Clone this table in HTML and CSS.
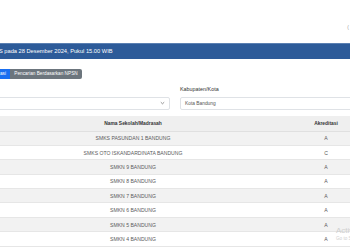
FILE: index.html
```html
<!DOCTYPE html>
<html lang="id">
<head>
<meta charset="utf-8">
<title>Daftar Sekolah</title>
<link rel="stylesheet" href="styles.css">
</head>
<body>
<div class="top"><span class="corner">(</span></div>
<div class="banner">S pada 28 Desember 2024, Pukul 15.00 WIB</div>
<div class="tabs">
  <button class="btn btn-blue">asi</button>
  <button class="btn btn-gray">Pencarian Berdasarkan NPSN</button>
</div>
<div class="filters">
  <div class="field field-left">
    <label class="label">&nbsp;</label>
    <div class="select"><span class="value"></span>
      <svg class="chev" width="5" height="4" viewBox="0 0 5 4"><path d="M0.8 1.2 L2.5 2.8 L4.2 1.2" fill="none" stroke="#666" stroke-width="0.7"/></svg>
    </div>
  </div>
  <div class="field field-right">
    <label class="label">Kabupaten/Kota</label>
    <div class="select"><span class="value">Kota Bandung</span></div>
  </div>
</div>
<table class="table">
  <thead>
    <tr><th class="c1">Nama Sekolah/Madrasah</th><th class="c2">Akreditasi</th></tr>
  </thead>
  <tbody>
    <tr><td>SMKS PASUNDAN 1 BANDUNG</td><td>A</td></tr>
    <tr><td>SMKS OTO ISKANDARDINATA BANDUNG</td><td>C</td></tr>
    <tr><td>SMKN 9 BANDUNG</td><td>A</td></tr>
    <tr><td>SMKN 8 BANDUNG</td><td>A</td></tr>
    <tr><td>SMKN 7 BANDUNG</td><td>A</td></tr>
    <tr><td>SMKN 6 BANDUNG</td><td>A</td></tr>
    <tr><td>SMKN 5 BANDUNG</td><td>A</td></tr>
    <tr><td>SMKN 4 BANDUNG</td><td>A</td></tr>
  </tbody>
</table>
<div class="watermark"><div class="wm-big">Activate Windows</div><div class="wm-small">Go to Settings to activate Windows.</div></div>
</body>
</html>
```
FILE: styles.css
```css
html, body {
  margin: 0;
  padding: 0;
  background: #ffffff;
  overflow: hidden;
  width: 350px;
  height: 250px;
}
body {
  font-family: "Liberation Sans", Arial, sans-serif;
  color: #333;
  position: relative;
}
.top {
  height: 43px;
  display: flex;
  justify-content: flex-end;
  align-items: flex-start;
}
.corner {
  font-size: 5px;
  color: #999;
  margin-top: 24px;
  margin-right: 1px;
}
.banner {
  height: 14.5px;
  line-height: 14.5px;
  border-top: 1px solid #5b80b2;
  background: #2d5b99;
  color: #ffffff;
  font-size: 5.7px;
  white-space: nowrap;
  margin-left: -1px;
}
.tabs {
  display: flex;
  margin-top: 10px;
  height: 10.5px;
}
.btn {
  border: 0;
  margin: 0;
  padding: 0;
  height: 10.5px;
  font-family: inherit;
  font-size: 4.7px;
  color: #fff;
  white-space: nowrap;
}
.btn-blue {
  width: 10px;
  background: #1a6ff0;
  text-align: left;
  padding-left: 0;
}
.btn-gray {
  width: 72px;
  background: #6c757d;
  border-radius: 0 2px 2px 0;
  text-align: center;
}
.filters {
  display: flex;
  gap: 8px;
  margin-top: 7px;
}
.field {
  display: flex;
  flex-direction: column;
}
.field-left {
  width: 172px;
  margin-left: -2px;
  flex: none;
}
.field-right {
  width: 200px;
  flex: none;
  margin-left: 2px;
}
.label {
  height: 6px;
  line-height: 6px;
  font-size: 5.4px;
  color: #333;
  white-space: nowrap;
}
.select {
  margin-top: 4.5px;
  height: 11px;
  border: 1px solid #dfe2e6;
  border-radius: 2px;
  display: flex;
  align-items: center;
  justify-content: space-between;
  padding: 0 4px 0 4px;
}
.value {
  font-size: 4.85px;
  color: #555;
  white-space: nowrap;
}
.chev {
  display: block;
  margin-right: 0;
}
.table {
  margin-top: 6.5px;
  border-collapse: collapse;
  table-layout: fixed;
  width: 386px;
}
.c1 { width: 266px; }
.c2 { width: 120px; }
.table th {
  height: 14.5px;
  padding: 0;
  background: #efefef;
  font-size: 4.9px;
  font-weight: bold;
  color: #333;
  text-align: center;
  border-bottom: 1px solid #e0e0e0;
}
.table td {
  height: 13.4px;
  padding: 0;
  font-size: 5.1px;
  color: #5a5a5a;
  text-align: center;
  border-bottom: 1px solid #e6e6e6;
  white-space: nowrap;
}
.table tbody tr:nth-child(odd) td {
  background: #f2f2f2;
}
.watermark {
  position: absolute;
  left: 336px;
  top: 226px;
  white-space: nowrap;
  color: #cfcfcf;
}
.wm-big {
  font-size: 8px;
  line-height: 10px;
}
.wm-small {
  font-size: 4.6px;
  line-height: 6px;
}
```
